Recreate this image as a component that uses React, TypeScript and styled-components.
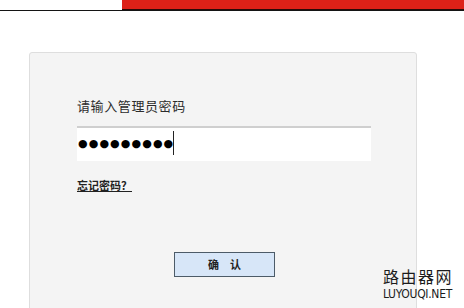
import React from 'react'
import styled, { createGlobalStyle } from 'styled-components'

const GlobalStyle = createGlobalStyle`
  html, body {
    margin: 0;
    padding: 0;
    background: #fff;
    overflow: hidden;
  }
  body {
    font-family: "Noto Sans CJK SC", "Noto Sans", sans-serif;
  }
`

const Page = styled.div`
  position: relative;
  width: 464px;
  height: 308px;
  overflow: hidden;
  background: #fff;
`

const TopBar = styled.div`
  display: flex;
  height: 10px;
  border-bottom: 1px solid #141414;
`

const TopBlank = styled.div`
  width: 122px;
  background: #fff;
`

const TopRed = styled.div`
  flex: 1;
  background: #dd2118;
  border-bottom: 1px solid #2a0a08;
`

const Main = styled.div`
  padding: 41px 0 0 29px;
`

const Panel = styled.div`
  width: 388px;
  height: 270px;
  background: #f4f4f4;
  border: 1px solid #dedede;
  border-radius: 3px;
  padding: 44px 0 0 47px;
  box-sizing: border-box;
`

const Label = styled.div`
  font-size: 13px;
  line-height: 18px;
  color: #2c2c2c;
  letter-spacing: 0.6px;
`

const Field = styled.div`
  margin-top: 11px;
  width: 294px;
  height: 35px;
  background: #fff;
  border-top: 2px solid #cfcfcf;
  box-sizing: border-box;
  display: flex;
  align-items: center;
  padding-left: 1px;
`

const Dots = styled.span`
  font-family: "DejaVu Sans", sans-serif;
  font-size: 11px;
  letter-spacing: 1.1px;
  color: #000;
  line-height: 1;
  margin-top: -2px;
`

const Caret = styled.span`
  width: 1px;
  height: 24px;
  background: #222;
  margin-left: -1px;
  margin-top: -4px;
`

const ForgotLink = styled.a`
  display: inline-block;
  margin-top: 17px;
  font-size: 11px;
  line-height: 14px;
  color: #222;
  font-weight: 700;
  text-decoration: underline;
  text-underline-offset: 1px;
  cursor: pointer;
`

const ButtonRow = styled.div`
  margin-top: 55px;
  padding-left: 97px;
`

const ConfirmButton = styled.button`
  width: 101px;
  height: 25px;
  background: #d7e6f8;
  border: 1px solid #4c5b68;
  font-family: "Noto Sans CJK SC", sans-serif;
  font-size: 11px;
  font-weight: 700;
  color: #222;
  padding: 0;
  cursor: pointer;
`

const Watermark = styled.div`
  position: absolute;
  left: 383px;
  top: 267px;
  width: 76px;
  display: flex;
  flex-direction: column;
  align-items: flex-start;
  gap: 3px;
  color: #1c1c1c;
  pointer-events: none;
`

const MarkCn = styled.span`
  font-size: 16px;
  line-height: 18px;
  letter-spacing: 1.5px;
`

const MarkEn = styled.span`
  font-family: "DejaVu Sans Condensed", sans-serif;
  font-size: 12px;
  line-height: 12px;
  letter-spacing: -0.3px;
`

export default function App() {
  return (
    <Page>
      <GlobalStyle />
      <TopBar>
        <TopBlank />
        <TopRed />
      </TopBar>
      <Main>
        <Panel>
          <Label>请输入管理员密码</Label>
          <Field>
            <Dots>●●●●●●●●●</Dots>
            <Caret />
          </Field>
          <ForgotLink>忘记密码？</ForgotLink>
          <ButtonRow>
            <ConfirmButton>确　认</ConfirmButton>
          </ButtonRow>
        </Panel>
      </Main>
      <Watermark>
        <MarkCn>路由器网</MarkCn>
        <MarkEn>LUYOUQI.NET</MarkEn>
      </Watermark>
    </Page>
  )
}
